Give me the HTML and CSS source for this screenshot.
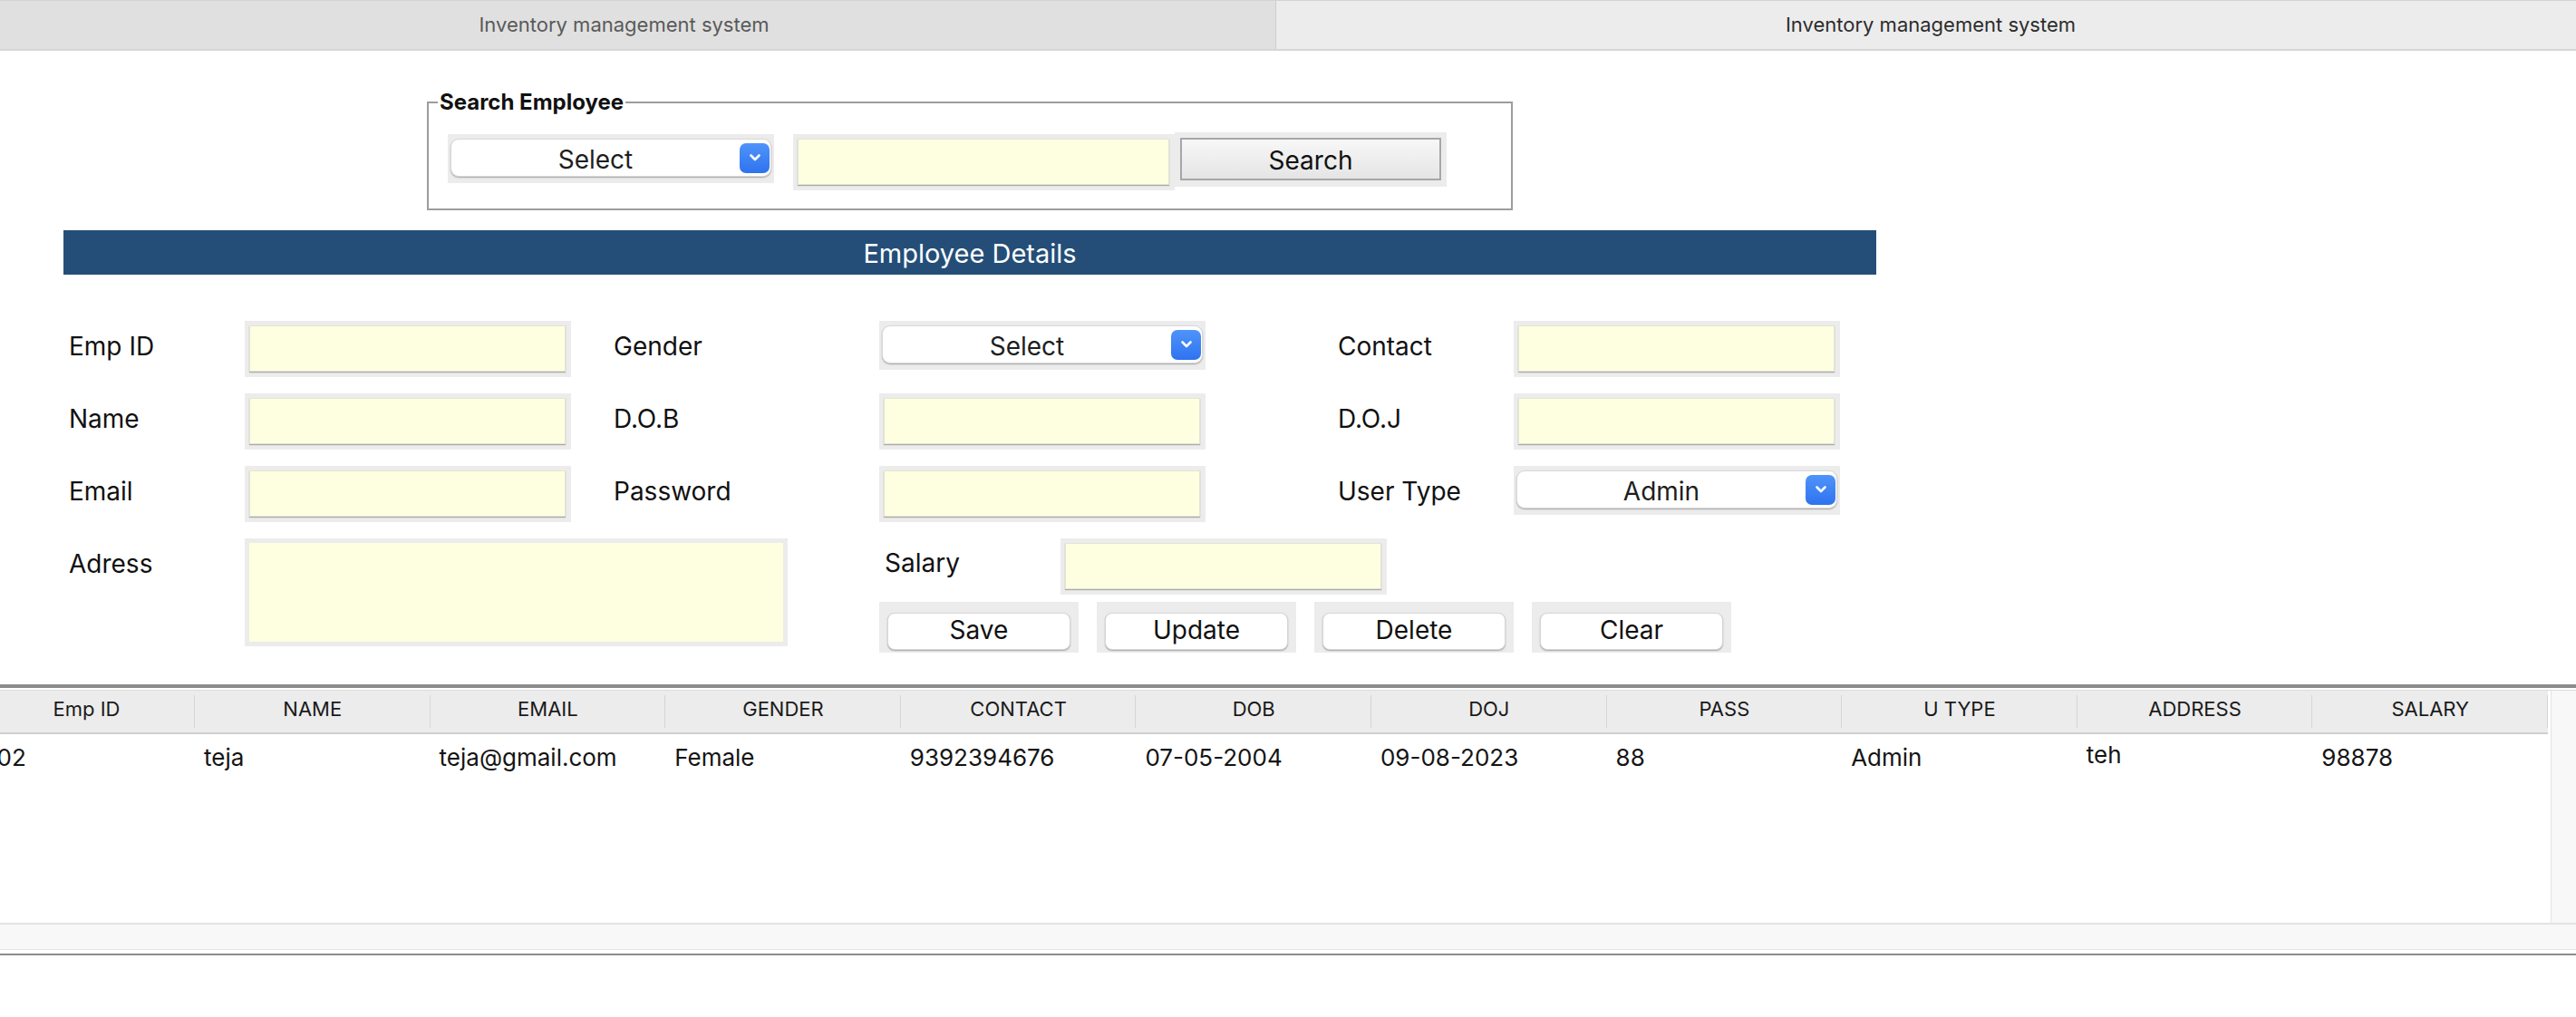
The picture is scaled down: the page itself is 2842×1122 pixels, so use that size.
FILE: index.html
```html
<!DOCTYPE html>
<html lang="en">
<head>
<meta charset="utf-8">
<title>Inventory management system</title>
<link rel="stylesheet" href="styles.css">
</head>
<body>
<div class="tabs">
  <div class="tab tab-inactive">Inventory management system</div>
  <div class="tab tab-active">Inventory management system</div>
</div>

<fieldset class="search-box">
  <legend>Search Employee</legend>
  <div class="search-row">
    <div class="combo combo-search">
      <div class="combo-btn">
        <span class="combo-text">Select</span>
        <span class="chev"><svg viewBox="0 0 32 32" width="32" height="32"><path d="M11.5 13.5 L16 18 L20.5 13.5" fill="none" stroke="#fff" stroke-width="2.6" stroke-linecap="round" stroke-linejoin="round"/></svg></span>
      </div>
    </div>
    <div class="tf tf-search"><div class="tf-in"></div></div>
    <div class="btn-search-wrap"><button class="btn-search">Search</button></div>
  </div>
</fieldset>

<div class="section-head">Employee Details</div>

<div class="form">
  <div class="lbl">Emp ID</div>
  <div class="tf"><div class="tf-in"></div></div>
  <div class="lbl lbl-2">Gender</div>
  <div class="combo">
    <div class="combo-btn">
      <span class="combo-text">Select</span>
      <span class="chev"><svg viewBox="0 0 32 32" width="32" height="32"><path d="M11.5 13.5 L16 18 L20.5 13.5" fill="none" stroke="#fff" stroke-width="2.6" stroke-linecap="round" stroke-linejoin="round"/></svg></span>
    </div>
  </div>
  <div class="lbl lbl-3">Contact</div>
  <div class="tf"><div class="tf-in"></div></div>

  <div class="lbl">Name</div>
  <div class="tf"><div class="tf-in"></div></div>
  <div class="lbl lbl-2">D.O.B</div>
  <div class="tf"><div class="tf-in"></div></div>
  <div class="lbl lbl-3">D.O.J</div>
  <div class="tf"><div class="tf-in"></div></div>

  <div class="lbl">Email</div>
  <div class="tf"><div class="tf-in"></div></div>
  <div class="lbl lbl-2">Password</div>
  <div class="tf"><div class="tf-in"></div></div>
  <div class="lbl lbl-3">User Type</div>
  <div class="combo">
    <div class="combo-btn">
      <span class="combo-text">Admin</span>
      <span class="chev"><svg viewBox="0 0 32 32" width="32" height="32"><path d="M11.5 13.5 L16 18 L20.5 13.5" fill="none" stroke="#fff" stroke-width="2.6" stroke-linecap="round" stroke-linejoin="round"/></svg></span>
    </div>
  </div>

  <div class="lbl">Adress</div>
  <div class="ta"><div class="ta-in"></div></div>
  <div class="salary-block">
    <div class="salary-row">
      <div class="lbl lbl-salary">Salary</div>
      <div class="tf"><div class="tf-in"></div></div>
    </div>
    <div class="actions">
      <div class="btn-wrap"><button class="btn">Save</button></div>
      <div class="btn-wrap"><button class="btn">Update</button></div>
      <div class="btn-wrap"><button class="btn">Delete</button></div>
      <div class="btn-wrap"><button class="btn">Clear</button></div>
    </div>
  </div>
</div>

<div class="table-pane">
  <div class="pane-main">
    <div class="viewport">
      <table class="grid">
        <colgroup>
          <col class="c-first"><col><col><col><col><col><col><col><col><col><col>
        </colgroup>
        <thead>
          <tr>
            <th>Emp ID</th><th>NAME</th><th>EMAIL</th><th>GENDER</th><th>CONTACT</th><th>DOB</th><th>DOJ</th><th>PASS</th><th>U TYPE</th><th>ADDRESS</th><th>SALARY</th>
          </tr>
        </thead>
        <tbody>
          <tr>
            <td>102</td><td>teja</td><td>teja@gmail.com</td><td>Female</td><td>9392394676</td><td>07-05-2004</td><td>09-08-2023</td><td>88</td><td>Admin</td><td class="td-addr">teh</td><td>98878</td>
          </tr>
        </tbody>
      </table>
    </div>
    <div class="vscroll"></div>
  </div>
  <div class="hscroll"></div>
</div>
</body>
</html>
```
FILE: styles.css
```css
* { box-sizing: border-box; }

html, body {
  margin: 0;
  padding: 0;
  background: #ffffff;
}

body {
  width: 2842px;
  height: 1122px;
  overflow: hidden;
  font-family: Inter, "Noto Sans", "Liberation Sans", sans-serif;
  color: #141414;
}

/* ---------- tabs ---------- */
.tabs {
  display: flex;
  height: 56px;
  border-top: 1px solid #d3d3d3;
  border-bottom: 2px solid #d6d6d6;
}
.tab {
  display: flex;
  align-items: center;
  justify-content: center;
  font-size: 22px;
  padding-bottom: 2px;
}
.tab-inactive {
  width: 1408px;
  background: #e0e0e0;
  color: #5a5a5a;
  border-right: 1px solid #cdcdcd;
  padding-right: 30px;
}
.tab-active {
  flex: 1;
  background: #ececec;
  color: #2c2c2c;
  padding-left: 10px;
}

/* ---------- search group ---------- */
.search-box {
  margin: 44px 0 0 471px;
  width: 1198px;
  border: 2px solid #9d9d9d;
  padding: 20px 20px 20px 21px;
  min-width: 0;
}
.search-box legend {
  font-weight: 700;
  font-size: 24px;
  line-height: 26px;
  padding: 0 2px;
  margin-left: -11px;
  color: #111;
}
.search-row {
  display: flex;
  align-items: flex-start;
}

/* text field */
.tf {
  width: 360px;
  height: 62px;
  background: #ececec;
  padding: 5px 6px 6px 5px;
}
.tf-in {
  width: 100%;
  height: 100%;
  background: #fefee0;
  border: 1px solid #e4e4d4;
  box-shadow: 0 1px 1px rgba(0, 0, 0, 0.28);
}

.search-row .combo-search { margin-top: 2px; }
.search-row .tf-search {
  width: 421px;
  margin: 2px 0 0 21px;
}
.btn-search-wrap {
  width: 300px;
  height: 60px;
  background: #ececec;
  padding: 6px 6px 7px 6px;
}
.btn-search {
  width: 100%;
  height: 100%;
  border: 2px solid #a7a7a7;
  background: linear-gradient(#f7f7f7, #e5e5e5);
  font-family: inherit;
  font-size: 28px;
  color: #111;
  padding: 2px 0 0 0;
}

/* ---------- section header ---------- */
.section-head {
  margin: 22px 0 0 70px;
  width: 2000px;
  height: 49px;
  padding-top: 2px;
  background: #244e78;
  color: #ffffff;
  font-size: 29px;
  display: flex;
  align-items: center;
  justify-content: center;
}

/* ---------- form ---------- */
.form {
  margin: 51px 0 0 76px;
  display: grid;
  grid-template-columns: 194px 360px 340px 360px 340px 360px;
  grid-template-rows: 62px 62px 62px auto;
  row-gap: 18px;
}
.lbl {
  font-size: 28px;
  line-height: 34px;
  padding-top: 11px;
  color: #111;
}
.lbl-2 { padding-left: 47px; }
.lbl-3 { padding-left: 146px; }

/* textarea */
.ta {
  grid-column: 2 / span 2;
  width: 599px;
  height: 119px;
  background: #ececec;
  padding: 5px;
}
.ta-in {
  width: 100%;
  height: 100%;
  background: #fefee0;
}

/* combo box */
.combo {
  width: 360px;
  height: 54px;
  background: #ececec;
  padding: 5px 3px 7px 3px;
}
.combo-btn {
  height: 100%;
  background: #ffffff;
  border: 1px solid #d9d9d9;
  border-radius: 9px;
  box-shadow: 0 1px 1.5px rgba(0, 0, 0, 0.3);
  display: flex;
  align-items: center;
  padding: 0 1px 0 0;
}
.combo-text {
  flex: 1;
  text-align: center;
  font-size: 28px;
  padding-top: 3px;
  color: #1e1e1e;
}
.chev {
  width: 33px;
  height: 33px;
  border-radius: 7px;
  background: linear-gradient(#4f94fa, #2e73ef);
  display: flex;
  align-items: center;
  justify-content: center;
}
.chev svg { display: block; }

/* salary + buttons */
.salary-block {
  grid-column: 4 / span 3;
}
.salary-row {
  display: flex;
}
.lbl-salary {
  width: 200px;
  padding-left: 6px;
  padding-top: 10px;
}
.actions {
  display: flex;
  gap: 20px;
  margin-top: 8px;
}
.btn-wrap {
  width: 220px;
  height: 56px;
  background: #ececec;
  padding: 12px 9px 3px 9px;
}
.btn {
  width: 100%;
  height: 100%;
  background: #ffffff;
  border: 1px solid #d6d6d6;
  border-radius: 8px;
  box-shadow: 0 1px 1.5px rgba(0, 0, 0, 0.3);
  font-family: inherit;
  font-size: 28px;
  color: #111;
  padding: 0 0 4px 0;
}

/* ---------- table ---------- */
.table-pane {
  margin-top: 35px;
  border-top: 4px solid #8c8c8c;
  border-bottom: 2px solid #8c8c8c;
  padding: 2px 0 4px 0;
}
.pane-main {
  display: flex;
  border-top: 1px solid #dcdcdc;
}
.viewport {
  flex: 1;
  height: 256px;
  overflow: hidden;
}
.vscroll {
  width: 28px;
  background: #f8f8f8;
  border-left: 1px solid #e4e4e4;
}
.hscroll {
  height: 30px;
  background: #f8f8f8;
  border-top: 2px solid #e3e3e3;
  border-bottom: 1px solid #e6e6e6;
}

.grid {
  table-layout: fixed;
  border-collapse: collapse;
  width: 2835px;
  margin-left: -24px;
}
.grid col { width: 259.6px; }
.grid col.c-first { width: 239px; }
.grid th {
  height: 47px;
  padding: 0 0 6px 0;
  font-weight: 400;
  font-size: 22px;
  color: #1a1a1a;
  text-align: center;
  background: linear-gradient(#d5d5d5, #d5d5d5) right center / 1px 36px no-repeat, #ececec;
  border-bottom: 2px solid #cfcfcf;
}
.grid td {
  height: 51px;
  padding: 0 0 0 10px;
  font-size: 26px;
  color: #141414;
  white-space: nowrap;
  overflow: hidden;
}
.grid td.td-addr { padding-bottom: 5px; }
```
